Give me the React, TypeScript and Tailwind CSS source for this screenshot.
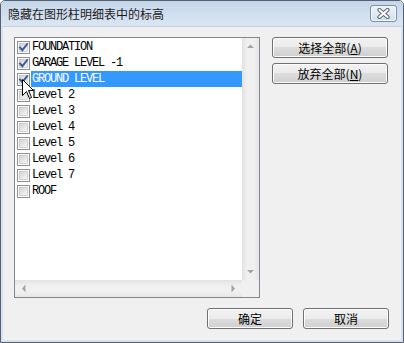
import React from "react"

const LEVELS: { name: string; checked: boolean }[] = [
  { name: "FOUNDATION", checked: true },
  { name: "GARAGE LEVEL -1", checked: true },
  { name: "GROUND LEVEL", checked: true },
  { name: "Level 2", checked: false },
  { name: "Level 3", checked: false },
  { name: "Level 4", checked: false },
  { name: "Level 5", checked: false },
  { name: "Level 6", checked: false },
  { name: "Level 7", checked: false },
  { name: "ROOF", checked: false },
]

const SELECTED = 2

const cjk = "font-['Noto_Sans_CJK_SC','Noto_Sans',sans-serif]"

function CheckBox({ checked }: { checked: boolean }) {
  return (
    <svg width="13" height="13" viewBox="0 0 13 13" className="shrink-0">
      <defs>
        <linearGradient id="cbg" x1="0" y1="0" x2="1" y2="1">
          <stop offset="0" stopColor="#d2d2d2" />
          <stop offset="1" stopColor="#f7f7f7" />
        </linearGradient>
      </defs>
      <rect x="0.5" y="0.5" width="12" height="12" fill="#fff" stroke="#8e8f8f" />
      <rect x="2.5" y="2.5" width="8" height="8" fill="url(#cbg)" stroke="#b8b8b8" strokeWidth="0.6" />
      {checked && (
        <path d="M3 6.5 L5.4 9.2 L10.2 3" fill="none" stroke="#3b56a0" strokeWidth="1.9" strokeLinecap="square" />
      )}
    </svg>
  )
}

function Arrow({ dir }: { dir: "up" | "down" | "left" | "right" }) {
  const d = {
    up: "M1 5 L4.5 1.5 L8 5 Z",
    down: "M1 2 L4.5 5.5 L8 2 Z",
    left: "M5.5 0.5 L2 4.5 L5.5 8.5 Z",
    right: "M2.5 0.5 L6 4.5 L2.5 8.5 Z",
  }[dir]
  const horiz = dir === "left" || dir === "right"
  return (
    <svg width={horiz ? 8 : 9} height={horiz ? 9 : 7} viewBox={horiz ? "0 0 8 9" : "0 0 9 7"}>
      <path d={d} fill="#a3a3a3" />
    </svg>
  )
}

function WinButton({ children, className }: { children: React.ReactNode; className: string }) {
  return (
    <div
      className={`flex h-[21px] items-center justify-center rounded-[3px] border border-[#707070] bg-[linear-gradient(#f2f2f2_0%,#ebebeb_50%,#dddddd_50%,#cfcfcf_100%)] text-[12px] leading-none text-black shadow-[inset_0_0_0_1px_#fcfcfc] ${cjk} ${className}`}
    >
      {children}
    </div>
  )
}

export default function App() {
  return (
    <div className="relative flex h-[343px] w-[404px] flex-col overflow-hidden rounded-t-[5px] border border-[#56606e] bg-[#d6e2f0]">
      {/* title bar */}
      <div className="flex h-[25px] shrink-0 items-center justify-between bg-[linear-gradient(#c5d6ea,#dbe6f3)] pl-[7px] pr-[6px]">
        <span className={`text-[12px] leading-none text-[#1b1b1b] ${cjk}`}>隐藏在图形柱明细表中的标高</span>
        <div className="flex h-[17px] w-[27px] items-center justify-center rounded-[3px] border border-[#7d8ea5] bg-[linear-gradient(#eef3f9,#d3dfec)] shadow-[inset_0_0_0_1px_#f4f8fc]">
          <svg width="13" height="11" viewBox="0 0 13 11">
            <path d="M2.5 2 L10.5 9 M10.5 2 L2.5 9" stroke="#5b6778" strokeWidth="4.2" strokeLinecap="round" />
            <path d="M2.5 2 L10.5 9 M10.5 2 L2.5 9" stroke="#fff" strokeWidth="2.2" strokeLinecap="round" />
          </svg>
        </div>
      </div>

      {/* client area */}
      <div className="mx-[2px] mb-[2px] flex flex-1 flex-col border-t border-[#c3cfdd] bg-[#f0f0f0]">
        <div className="flex gap-[12px] pl-[11px] pt-[10px]">
          {/* list box */}
          <div className="grid h-[261px] w-[246px] grid-cols-[227px_17px] grid-rows-[242px_17px] border border-[#828790] bg-white">
            <div className="flex flex-col pt-[1px] font-['Liberation_Mono',monospace] text-[12px] leading-none tracking-[-1.2px]">
              {LEVELS.map((lv, i) => (
                <div key={lv.name} className="flex h-[16px] items-center pl-[2px]">
                  <CheckBox checked={lv.checked} />
                  <div
                    className={`ml-[1px] flex h-[16px] flex-1 items-center pl-[1px] ${
                      i === SELECTED ? "bg-[#3399ff] text-white" : "text-black"
                    }`}
                  >
                    {lv.name}
                  </div>
                </div>
              ))}
            </div>
            <div className="flex flex-col items-center justify-between bg-[linear-gradient(90deg,#e2e2e2,#f0f0f0_30%,#f0f0f0_70%,#e6e6e6)] py-[5px]">
              <Arrow dir="up" />
              <Arrow dir="down" />
            </div>
            <div className="flex items-center justify-between bg-[linear-gradient(#e2e2e2,#f0f0f0_30%,#f0f0f0_70%,#e6e6e6)] px-[5px]">
              <Arrow dir="left" />
              <Arrow dir="right" />
            </div>
            <div className="bg-[#f0f0f0]" />
          </div>

          {/* side buttons */}
          <div className="flex flex-col gap-[5px]">
            <WinButton className="w-[116px]">
              选择全部(<span className="underline">A</span>)
            </WinButton>
            <WinButton className="w-[116px]">
              放弃全部(<span className="underline">N</span>)
            </WinButton>
          </div>
        </div>

        <div className="mt-[10px] flex justify-end gap-[10px] pr-[12px]">
          <WinButton className="w-[86px]">确定</WinButton>
          <WinButton className="w-[86px]">取消</WinButton>
        </div>
      </div>

      {/* mouse pointer */}
      <svg className="absolute left-[21px] top-[78px]" width="13" height="21" viewBox="0 0 13 21">
        <path d="M0.5 0.5 L0.5 16.5 L4.5 12.5 L7.5 19.5 L9.5 18.5 L6.5 11.5 L11.5 11.5 Z" fill="#fff" stroke="#000" strokeWidth="1" strokeLinejoin="miter" />
      </svg>
    </div>
  )
}
